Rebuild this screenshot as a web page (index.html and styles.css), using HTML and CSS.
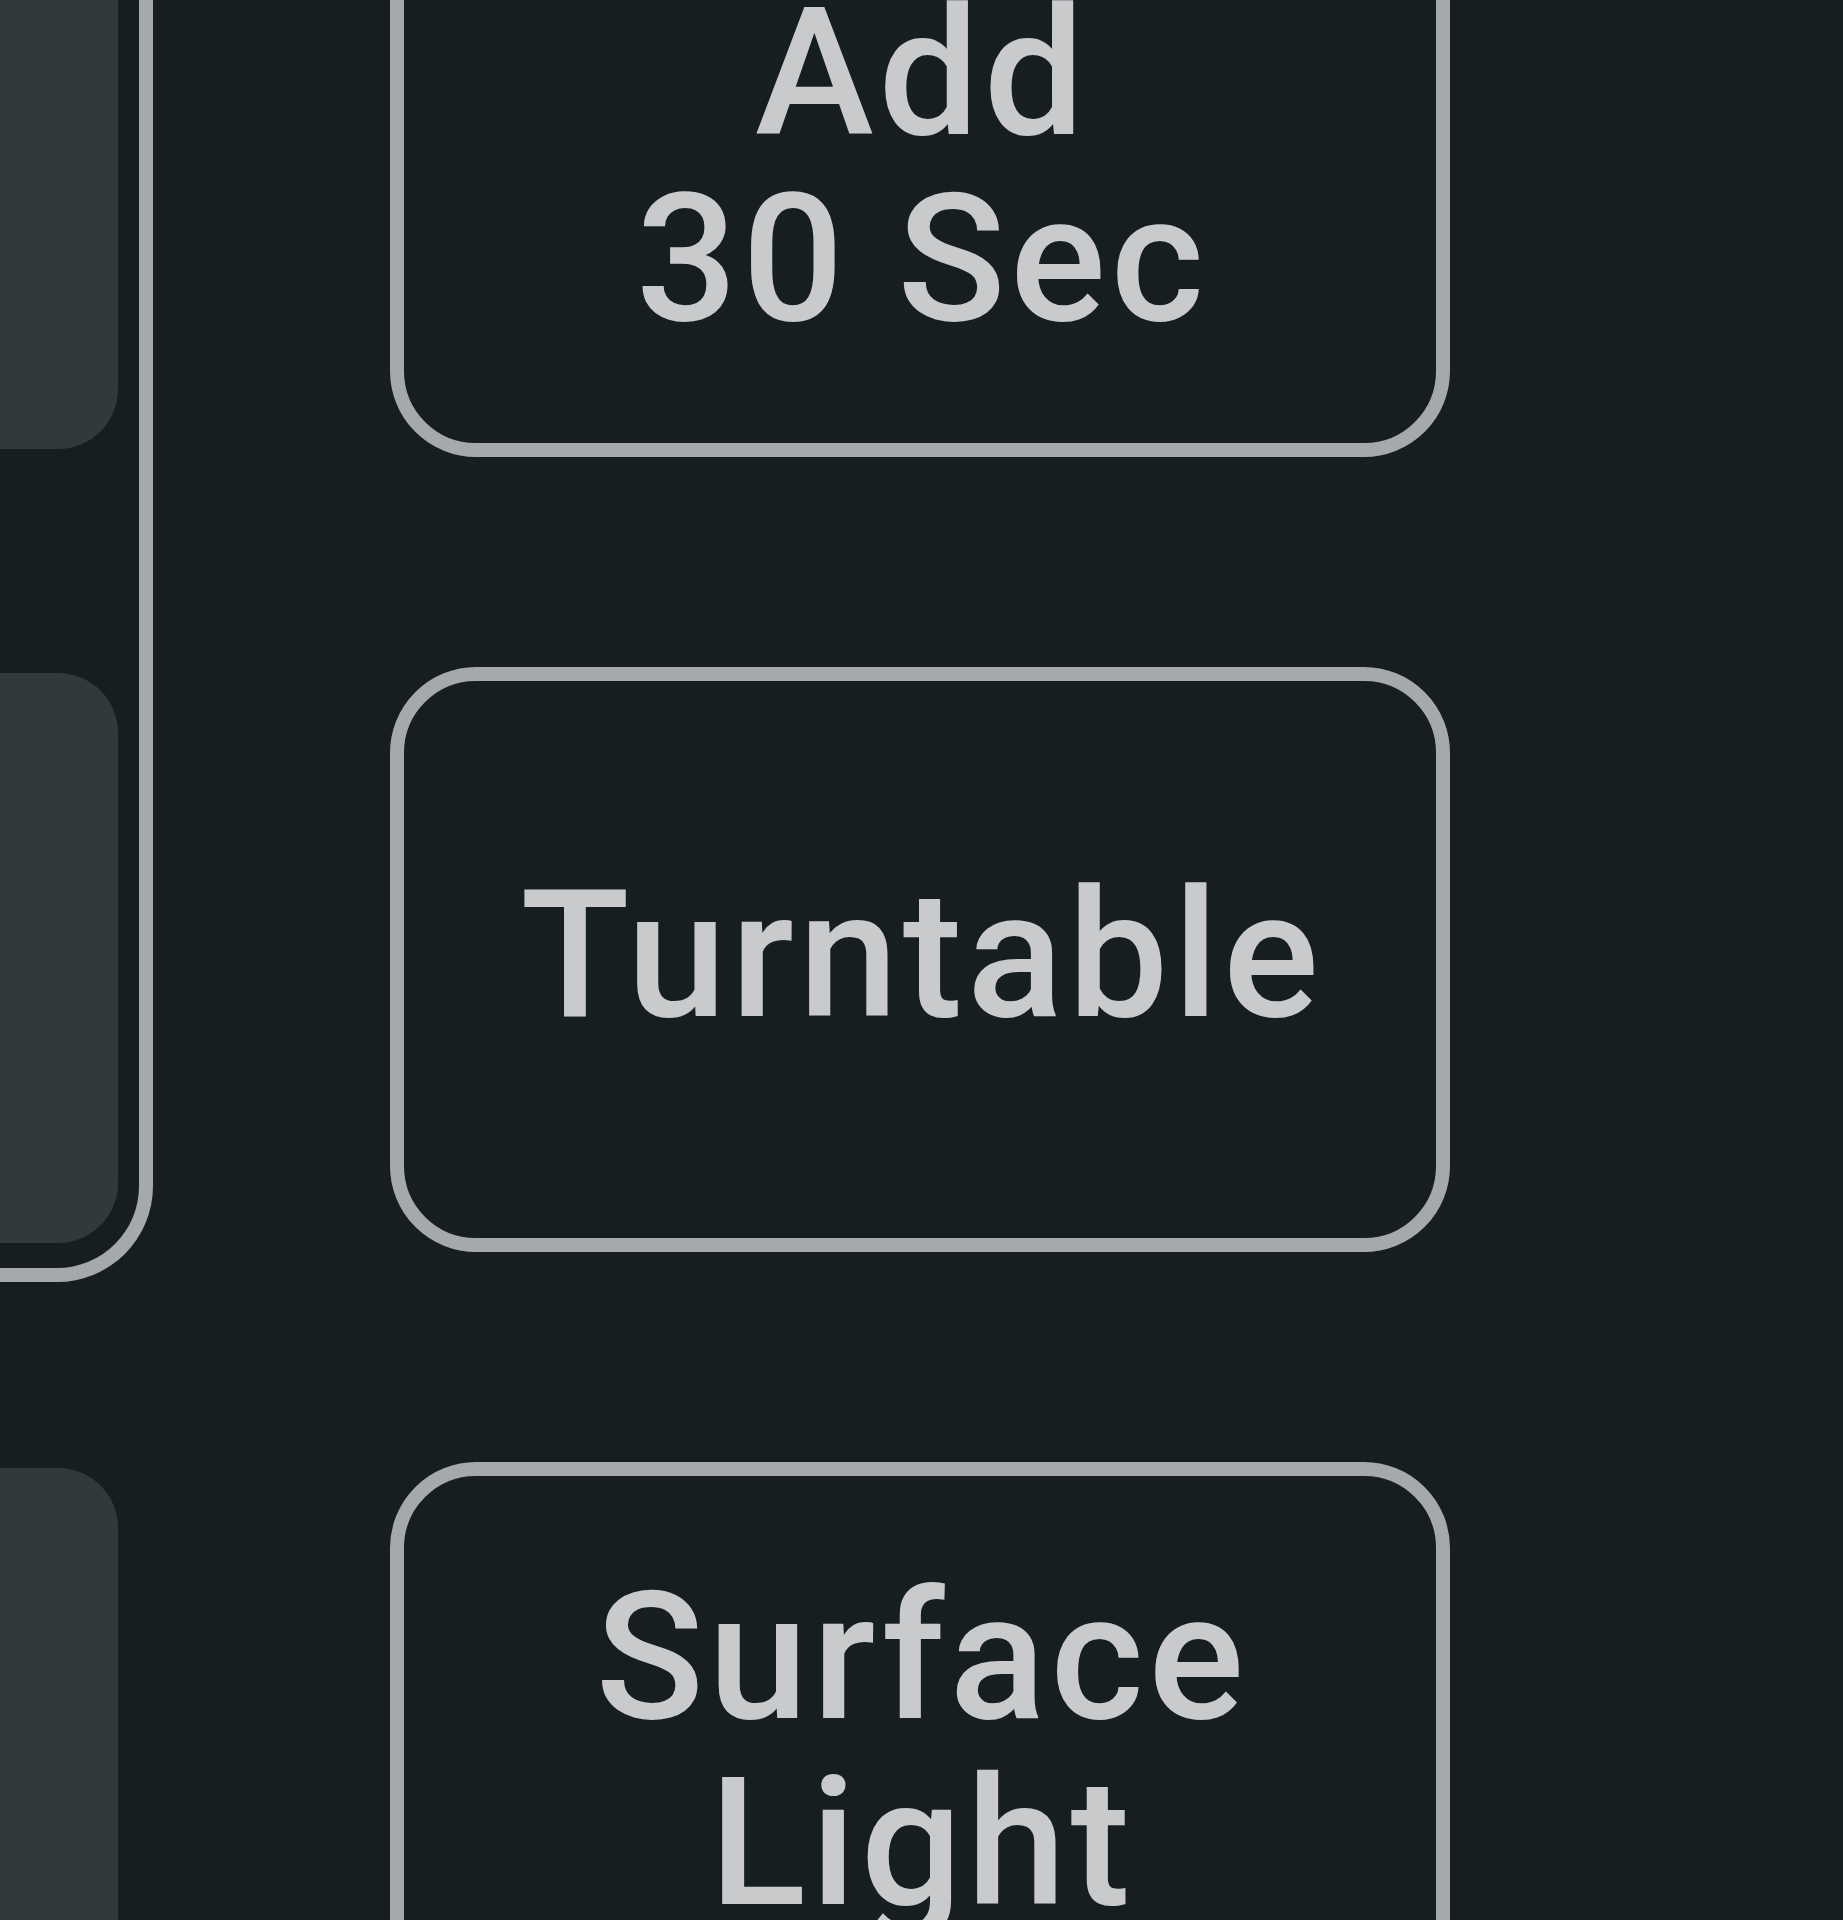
FILE: index.html
```html
<!DOCTYPE html>
<html lang="en">
<head>
<meta charset="utf-8">
<title>Controls</title>
<link rel="stylesheet" href="styles.css">
</head>
<body>
<main class="screen">
  <aside class="side">
    <div class="group">
      <div class="pill"></div>
      <div class="pill"></div>
    </div>
    <div class="group group-next">
      <div class="pill"></div>
    </div>
  </aside>
  <section class="actions">
    <button class="action action-first">Add<br>30 Sec</button>
    <button class="action">Turntable</button>
    <button class="action">Surface<br>Light</button>
  </section>
</main>
</body>
</html>
```

FILE: styles.css
```css
html, body {
  margin: 0;
  padding: 0;
  height: 100%;
  overflow: hidden;
  background: #161e21;
}

.screen {
  display: flex;
  align-items: flex-start;
  gap: 237px;
  height: 1920px;
  overflow: hidden;
}

.side {
  display: flex;
  flex-direction: column;
  margin-top: -121px;
}

.group {
  display: flex;
  flex-direction: column;
  gap: 224px;
  padding: 0 21px 25px 0;
  border-right: 14px solid #a6a9ac;
  border-bottom: 14px solid #a6a9ac;
  border-bottom-right-radius: 96px;
}

.group-next {
  margin-top: 186px;
  border-color: transparent;
}

.pill {
  width: 118px;
  height: 570px;
  background: #31393c;
  border-radius: 0 60px 60px 0;
}

.actions {
  display: flex;
  flex-direction: column;
  gap: 210px;
  margin-top: -128px;
}

.action {
  box-sizing: border-box;
  width: 1060px;
  height: 585px;
  margin: 0;
  padding: 0 0 9px 4px;
  background: transparent;
  border: 14px solid #a6a9ac;
  border-radius: 86px;
  color: #c9cacc;
  font-family: Roboto, "Noto Sans", sans-serif;
  font-weight: 500;
  font-size: 179px;
  line-height: 186px;
  letter-spacing: 4.5px;
  text-align: center;
  display: flex;
  align-items: center;
  justify-content: center;
}

.action-first {
  padding-bottom: 0;
  padding-top: 3px;
}
```
